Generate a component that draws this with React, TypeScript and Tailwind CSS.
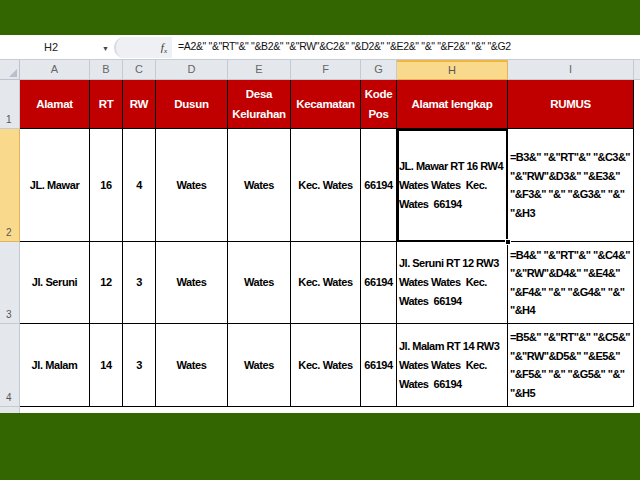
const font = { fontFamily: '"Liberation Sans", Arial, sans-serif' };

const cols = ['A', 'B', 'C', 'D', 'E', 'F', 'G', 'H', 'I'];
const headers = ['Alamat', 'RT', 'RW', 'Dusun', 'Desa\nKelurahan', 'Kecamatan', 'Kode\nPos', 'Alamat lengkap', 'RUMUS'];

type Row = {
  n: number;
  h: string;
  alamat: string;
  rt: string;
  rw: string;
  lengkap: string[];
  rumus: string[];
};

const rows: Row[] = [
  {
    n: 2,
    h: 'h-[113px]',
    alamat: 'JL. Mawar',
    rt: '16',
    rw: '4',
    lengkap: ['JL. Mawar RT 16 RW4', 'Wates Wates  Kec.', 'Wates  66194'],
    rumus: ['=B3&" "&"RT"&" "&C3&"', '"&"RW"&D3&" "&E3&"', '"&F3&" "&" "&G3&" "&"', '"&H3'],
  },
  {
    n: 3,
    h: 'h-[82px]',
    alamat: 'Jl. Seruni',
    rt: '12',
    rw: '3',
    lengkap: ['Jl. Seruni RT 12 RW3', 'Wates Wates  Kec.', 'Wates  66194'],
    rumus: ['=B4&" "&"RT"&" "&C4&"', '"&"RW"&D4&" "&E4&"', '"&F4&" "&" "&G4&" "&"', '"&H4'],
  },
  {
    n: 4,
    h: 'h-[83px]',
    alamat: 'Jl. Malam',
    rt: '14',
    rw: '3',
    lengkap: ['Jl. Malam RT 14 RW3', 'Wates Wates  Kec.', 'Wates  66194'],
    rumus: ['=B5&" "&"RT"&" "&C5&"', '"&"RW"&D5&" "&E5&"', '"&F5&" "&" "&G5&" "&"', '"&H5'],
  },
];

const grid = 'grid grid-cols-[20px_70px_33px_33px_72px_63px_70px_36px_111px_126px_6px]';

export default function App() {
  return (
    <div className="w-[640px] h-[480px] bg-[#336600] overflow-hidden" style={font}>
      <div className="h-[35px]" />
      {/* formula bar */}
      <div className="h-[25px] bg-white flex items-center border-b border-[#c5ccd6]">
        <div className="w-[114px] h-full flex items-center relative">
          <span className="w-full text-center text-[11px] text-[#222] pr-3">H2</span>
          <span className="absolute right-[5px] top-[9px] text-[7px] text-[#444]">▼</span>
        </div>
        <div className="w-[58px] h-[21px] bg-[#eef0f3] rounded-l-[10px] border-l-2 border-[#d7dbe1] flex items-center justify-end pr-[5px]">
          <span className="text-[11px] italic text-[#333]" style={{ fontFamily: '"Liberation Serif", serif' }}>
            f<sub className="text-[7px]">x</sub>
          </span>
        </div>
        <div className="pl-[6px] text-[10.5px] text-[#111] whitespace-pre tracking-[-0.35px]">
          =A2&amp;" "&amp;"RT"&amp;" "&amp;B2&amp;" "&amp;"RW"&amp;C2&amp;" "&amp;D2&amp;" "&amp;E2&amp;" "&amp;" "&amp;F2&amp;" "&amp;" "&amp;G2
        </div>
      </div>

      <div className="bg-white">
        {/* column letters */}
        <div className={`${grid} h-[20px]`}>
          <div className="bg-[#e4e8ed] border-r border-b border-[#bcc3cc] flex items-end justify-end p-[2px]">
            <svg width="8" height="8" viewBox="0 0 8 8">
              <path d="M8 0 L8 8 L0 8 Z" fill="#b9c0c9" />
            </svg>
          </div>
          {cols.map((c) => (
            <div
              key={c}
              className={`border-r border-b text-[11px] flex items-center justify-center ${
                c === 'H'
                  ? 'bg-[#f9da8c] border-[#e0b45a] border-t-2 border-t-[#f2b63e] text-[#555]'
                  : 'bg-[#e4e8ed] border-[#c4cad2] text-[#666]'
              }`}
            >
              {c}
            </div>
          ))}
          <div className="bg-[#e4e8ed] border-b border-[#c4cad2]" />
        </div>

        {/* header row */}
        <div className={`${grid} h-[49px]`}>
          <div className="bg-[#e4e8ed] border-r border-b border-[#c4cad2] flex items-end pl-[6px] pb-[1px] text-[10px] text-[#555]">1</div>
          {headers.map((h, i) => (
            <div
              key={i}
              className="bg-[#c00000] border-r border-b border-black flex items-center justify-center text-center text-white font-bold text-[11.5px] tracking-[-0.3px] leading-[20px] whitespace-pre"
            >
              {h}
            </div>
          ))}
          <div className="bg-white" />
        </div>

        {rows.map((r) => (
          <div key={r.n} className={`${grid} ${r.h}`}>
            <div
              className={`border-r border-b flex items-end pl-[6px] pb-[1px] text-[10px] text-[#555] ${
                r.n === 2 ? 'bg-[#f9da8c] border-[#e0b45a]' : 'bg-[#e4e8ed] border-[#c4cad2]'
              }`}
            >
              {r.n}
            </div>
            {[r.alamat, r.rt, r.rw, 'Wates', 'Wates', 'Kec. Wates', '66194'].map((v, i) => (
              <div
                key={i}
                className="border-r border-b border-black flex items-center justify-center text-[11px] font-bold text-black tracking-[-0.4px] whitespace-nowrap"
              >
                {v}
              </div>
            ))}
            <div
              className={`border-r border-b border-black flex flex-col justify-center pl-[2px] text-[11px] font-bold text-black tracking-[-0.5px] leading-[19px] relative ${
                r.n === 2 ? 'outline-2 outline-black -outline-offset-2' : ''
              }`}
            >
              {r.lengkap.map((l, i) => (
                <div key={i} className="whitespace-pre">
                  {l}
                </div>
              ))}
              {r.n === 2 && (
                <span className="absolute right-[-4px] bottom-[-4px] w-[6px] h-[6px] bg-black border border-white z-10" />
              )}
            </div>
            <div className="border-r border-b border-black flex flex-col justify-center pl-[2px] text-[11px] font-bold text-black tracking-[-0.55px] leading-[18.5px]">
              {r.rumus.map((l, i) => (
                <div key={i} className="whitespace-pre">
                  {l}
                </div>
              ))}
            </div>
            <div className="bg-white" />
          </div>
        ))}

        {/* spacer row below table */}
        <div className={`${grid} h-[6px]`}>
          <div className="bg-[#e4e8ed] border-r border-[#c4cad2]" />
          <div className="col-span-10 bg-white" />
        </div>
      </div>
    </div>
  );
}
